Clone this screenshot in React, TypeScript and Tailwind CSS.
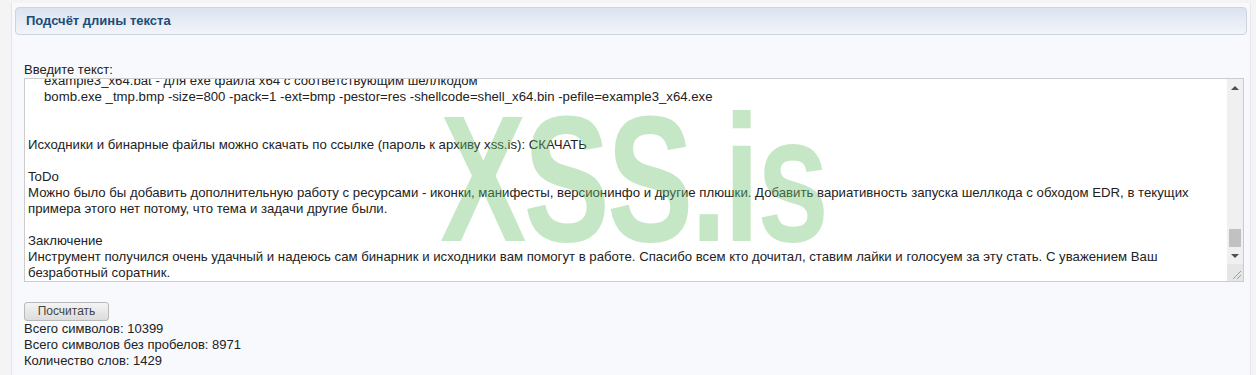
import React from "react";

const lines: { text: string; indent?: boolean }[] = [
  { text: "example3_x64.bat - для exe файла x64 с соответствующим шеллкодом", indent: true },
  { text: "bomb.exe _tmp.bmp -size=800 -pack=1 -ext=bmp -pestor=res -shellcode=shell_x64.bin -pefile=example3_x64.exe", indent: true },
  { text: "" },
  { text: "" },
  { text: "Исходники и бинарные файлы можно скачать по ссылке (пароль к архиву xss.is): СКАЧАТЬ" },
  { text: "" },
  { text: "ToDo" },
  { text: "Можно было бы добавить дополнительную работу с ресурсами - иконки, манифесты, версионинфо и другие плюшки. Добавить вариативность запуска шеллкода с обходом EDR, в текущих" },
  { text: "примера этого нет потому, что тема и задачи другие были." },
  { text: "" },
  { text: "Заключение" },
  { text: "Инструмент получился очень удачный и надеюсь сам бинарник и исходники вам помогут в работе. Спасибо всем кто дочитал, ставим лайки и голосуем за эту стать. С уважением Ваш" },
  { text: "безработный соратник." },
  { text: "" },
];

function FakeScrollbar() {
  return (
    <div className="flex w-[16px] flex-col bg-[#f0f0f0]">
      <div className="flex h-[17px] items-center justify-center">
        <div className="h-0 w-0 border-x-[4px] border-b-[4px] border-x-transparent border-b-[#505050]" />
      </div>
      <div className="flex-1 px-[2px]">
        <div className="mt-[133px] h-[18px] bg-[#c1c1c1]" />
      </div>
      <div className="flex h-[17px] items-center justify-center">
        <div className="h-0 w-0 border-x-[4px] border-t-[4px] border-x-transparent border-t-[#505050]" />
      </div>
      <div className="relative h-[17px] bg-[#e6e6e6]">
        <svg width="16" height="17" viewBox="0 0 16 17" className="absolute inset-0">
          <line x1="6" y1="15" x2="14" y2="7" stroke="#9a9a9a" strokeWidth="1" />
          <line x1="10" y1="15" x2="14" y2="11" stroke="#9a9a9a" strokeWidth="1" />
        </svg>
      </div>
    </div>
  );
}

export default function App() {
  return (
    <div className="h-[375px] overflow-hidden bg-[#f4f4f4] pt-[3px] font-['Liberation_Sans',sans-serif] text-[13px] text-[#222]">
      <div className="ml-[11px] mr-[5px] h-[372px] border-x border-[#e3e6eb] bg-[#f8f9fc] px-[3px] pt-[4px]">
        <div className="flex h-[28px] items-center rounded-[4px] border border-[#cdd4df] bg-gradient-to-b from-[#dce3ef] to-[#f2f5fa] pl-[10px]">
          <h1 className="text-[13px] font-bold text-[#1d4c78]">Подсчёт длины текста</h1>
        </div>

        <div className="pl-[9px] pr-[3px] pt-[27px]">
          <div className="h-[16px] leading-[16px]">Введите текст:</div>
          <div className="relative flex h-[204px] overflow-hidden border border-[#cccccc] bg-white">
            <div className="flex-1 overflow-hidden pl-[3px] text-[13.2px]">
              <div className="mt-[-6px] leading-[16px]">
                {lines.map((l, i) => (
                  <div key={i} className={`h-[16px] whitespace-nowrap ${l.indent ? "pl-[16px]" : ""}`}>
                    {l.text}
                  </div>
                ))}
              </div>
            </div>
            <FakeScrollbar />
            <div className="pointer-events-none absolute left-[415px] top-[10px] select-none">
              <span className="inline-block origin-left scale-x-[0.72] text-[180px] font-bold leading-none tracking-[-4px] text-[rgba(110,195,110,0.4)]">
                XSS.is
              </span>
            </div>
          </div>

          <div className="pt-[19px]">
            <button className="h-[19px] w-[85px] rounded-[3px] border border-[#b9b9b9] bg-gradient-to-b from-[#f4f4f4] to-[#dcdcdc] text-[12px] leading-[17px] text-[#444]">
              Посчитать
            </button>
          </div>
          <div className="leading-[16px]">
            <div className="h-[16px]">Всего символов: 10399</div>
            <div className="h-[16px]">Всего символов без пробелов: 8971</div>
            <div className="h-[16px]">Количество слов: 1429</div>
          </div>
        </div>
      </div>
    </div>
  );
}
